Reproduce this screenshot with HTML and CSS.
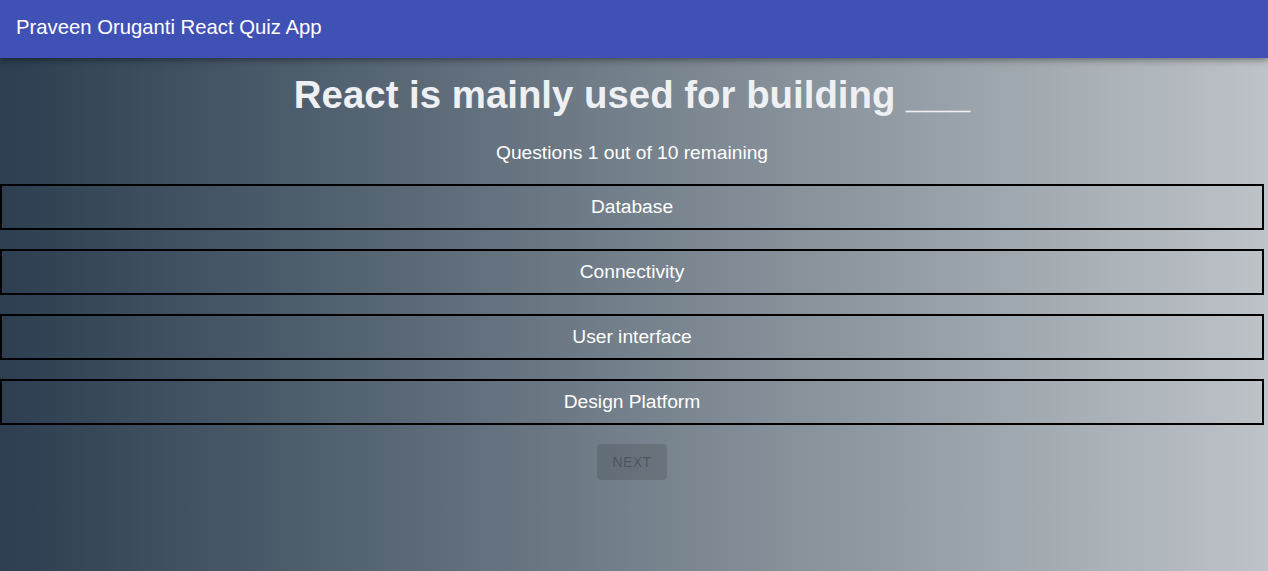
FILE: index.html
```html
<!DOCTYPE html>
<html lang="en">
<head>
<meta charset="utf-8">
<title>Praveen Oruganti React Quiz App</title>
<link rel="stylesheet" href="styles.css">
</head>
<body>
<header class="appbar">
  <h6 class="appbar-title">Praveen Oruganti React Quiz App</h6>
</header>
<main class="quiz">
  <h1 class="question">React is mainly used for building ___</h1>
  <p class="progress">Questions 1 out of 10 remaining</p>
  <div class="options">
    <div class="option">Database</div>
    <div class="option">Connectivity</div>
    <div class="option">User interface</div>
    <div class="option">Design Platform</div>
  </div>
  <div class="actions">
    <button class="next-btn" disabled>Next</button>
  </div>
</main>
</body>
</html>
```
FILE: styles.css
```css
html, body {
  margin: 0;
  padding: 0;
}
body {
  min-height: 100vh;
  font-family: "Liberation Sans", Arial, sans-serif;
  background: linear-gradient(to right, #2c3e50, #bdc3c7);
  color: #fff;
}
.appbar {
  height: 58px;
  background: #3f51b5;
  display: flex;
  align-items: center;
  padding: 0 16px;
  box-shadow: 0 2px 4px -1px rgba(0,0,0,0.2), 0 4px 5px 0 rgba(0,0,0,0.14), 0 1px 10px 0 rgba(0,0,0,0.12);
  position: relative;
}
.appbar-title {
  margin: 0;
  font-size: 20.3px;
  font-weight: 400;
  color: #fff;
  line-height: 1;
  padding-bottom: 3px;
}
.quiz {
  width: 1264px;
  display: flex;
  flex-direction: column;
}
.question {
  margin: 15px 0 0;
  font-size: 38.4px;
  line-height: 44px;
  font-weight: 700;
  text-align: center;
  color: #eef0f3;
}
.progress {
  margin: 25px 0 0;
  font-size: 19.2px;
  line-height: 22px;
  text-align: center;
  color: #fff;
}
.options {
  margin-top: 20px;
  display: flex;
  flex-direction: column;
  gap: 19px;
}
.option {
  border: 2px solid #000;
  height: 42px;
  display: flex;
  align-items: center;
  justify-content: center;
  font-size: 19.2px;
  color: #fff;
}
.actions {
  margin-top: 19px;
  display: flex;
  justify-content: center;
}
.next-btn {
  font-family: "Liberation Sans", Arial, sans-serif;
  font-size: 14px;
  letter-spacing: 0.4px;
  text-transform: uppercase;
  height: 36px;
  min-width: 64px;
  padding: 0 16px;
  border: none;
  border-radius: 4px;
  background: rgba(0,0,0,0.12);
  color: rgba(0,0,0,0.26);
}
```
